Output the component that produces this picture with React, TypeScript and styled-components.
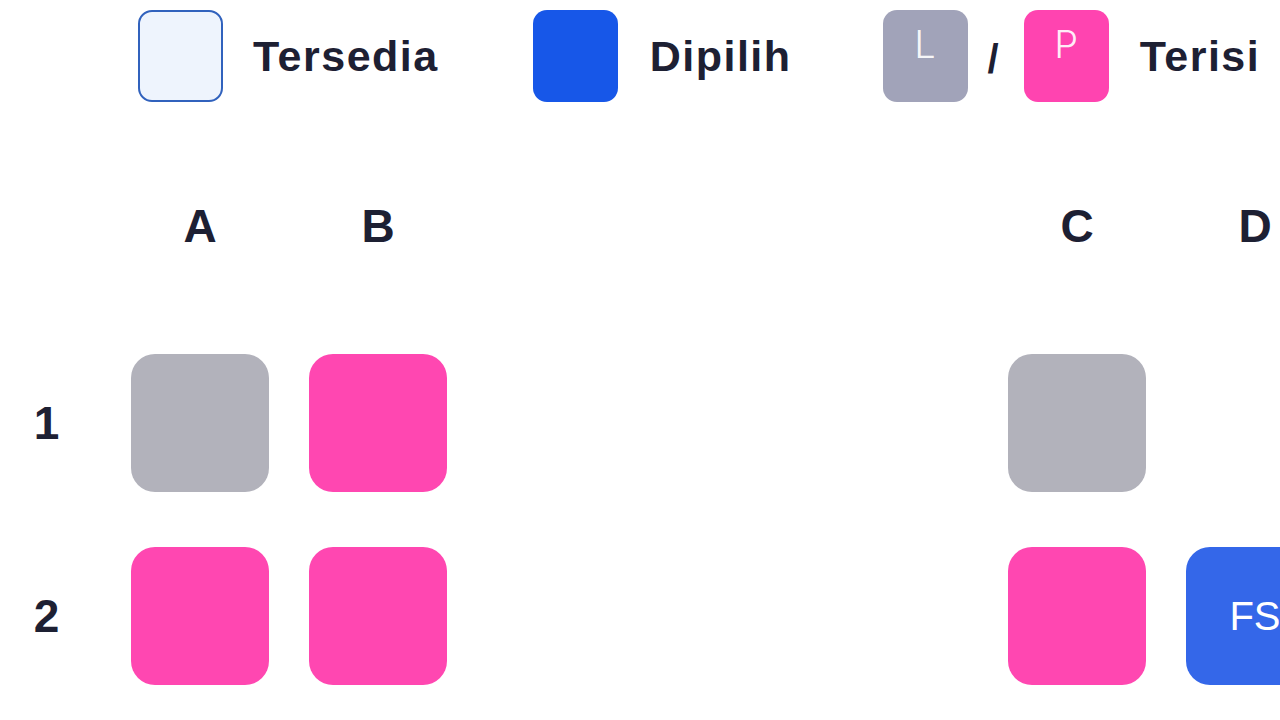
import React from 'react';
import styled, { createGlobalStyle } from 'styled-components';

const GlobalStyle = createGlobalStyle`
    html, body {
        margin: 0;
        padding: 0;
        background: #FFFFFF;
        overflow: hidden;
    }
    body {
        font-family: "Liberation Sans", Arial, sans-serif;
        color: #1d2033;
    }
`;

const Page = styled.div`
    width: 1280px;
    height: 720px;
    overflow: hidden;
    background: #FFFFFF;
`;

const Legend = styled.div`
    display: flex;
    align-items: center;
    padding: 10px 0 0 138px;
    height: 92px;
`;

const LegendItem = styled.div<{ $after?: number }>`
    display: flex;
    align-items: center;
    margin-right: ${p => p.$after ?? 0}px;
`;

const LegendBox = styled.div<{ $bg: string; $border?: string }>`
    width: 85px;
    height: 92px;
    box-sizing: border-box;
    border-radius: 14px;
    background: ${p => p.$bg};
    border: ${p => (p.$border ? `2px solid ${p.$border}` : 'none')};
    display: flex;
    justify-content: center;
    color: rgba(255, 255, 255, 0.92);
    font-family: Inter, "Liberation Sans", sans-serif;
    font-weight: 300;
    font-size: 38px;
    line-height: 1;
    padding-top: 15px;
`;

const LegendLabel = styled.span<{ $gap?: number }>`
    margin-left: ${p => p.$gap ?? 31}px;
    font-size: 43px;
    font-weight: 700;
    letter-spacing: 1.5px;
    color: #1d2033;
`;

const Slash = styled.span`
    margin: 6px 25px 0 20px;
    font-size: 40px;
    font-weight: 700;
    color: #1d2033;
`;

const Grid = styled.div`
    display: grid;
    grid-template-columns: 91px 138px 138px 481px 138px 138px;
    column-gap: 40px;
    width: 1400px;
`;

const HeaderGrid = styled(Grid)`
    margin-top: 96px;
    margin-bottom: 100px;
    height: 56px;
`;

const SeatGrid = styled(Grid)`
    row-gap: 55px;
    grid-auto-rows: 138px;
`;

const ColHead = styled.div`
    display: flex;
    align-items: center;
    justify-content: center;
    font-size: 46px;
    font-weight: 700;
    line-height: 56px;
    color: #1d2033;
`;

const RowLabel = styled.div`
    display: flex;
    align-items: center;
    justify-content: center;
    padding-left: 2px;
    font-size: 46px;
    font-weight: 700;
    color: #1d2033;
`;

type SeatKind = 'male' | 'female' | 'selected' | 'empty';

const seatColors: Record<SeatKind, string> = {
    male: '#b2b2bb',
    female: '#ff47b1',
    selected: '#3467e9',
    empty: 'transparent',
};

const Seat = styled.div<{ $kind: SeatKind }>`
    width: 138px;
    height: 138px;
    border-radius: 24px;
    background: ${p => seatColors[p.$kind]};
    display: flex;
    align-items: center;
    justify-content: center;
    color: #FFFFFF;
    font-size: 40px;
    font-weight: 400;
`;

const Aisle = styled.div``;

const rows: { label: string; seats: [SeatKind, SeatKind, SeatKind, SeatKind]; code?: string }[] = [
    { label: '1', seats: ['male', 'female', 'male', 'empty'] },
    { label: '2', seats: ['female', 'female', 'female', 'selected'], code: 'FS' },
];

const App: React.FC = () => {
    return (
        <Page>
            <GlobalStyle />
            <Legend>
                <LegendItem $after={94}>
                    <LegendBox $bg="#eef4fd" $border="#3162bd" />
                    <LegendLabel $gap={30}>Tersedia</LegendLabel>
                </LegendItem>
                <LegendItem $after={91}>
                    <LegendBox $bg="#1757e8" />
                    <LegendLabel $gap={32}>Dipilih</LegendLabel>
                </LegendItem>
                <LegendItem>
                    <LegendBox $bg="#a1a3b9">L</LegendBox>
                    <Slash>/</Slash>
                    <LegendBox $bg="#ff44b0">P</LegendBox>
                    <LegendLabel $gap={31}>Terisi</LegendLabel>
                </LegendItem>
            </Legend>

            <HeaderGrid>
                <div />
                <ColHead>A</ColHead>
                <ColHead>B</ColHead>
                <Aisle />
                <ColHead>C</ColHead>
                <ColHead>D</ColHead>
            </HeaderGrid>

            <SeatGrid>
                {rows.map(r => (
                    <React.Fragment key={r.label}>
                        <RowLabel>{r.label}</RowLabel>
                        <Seat $kind={r.seats[0]} />
                        <Seat $kind={r.seats[1]} />
                        <Aisle />
                        <Seat $kind={r.seats[2]} />
                        <Seat $kind={r.seats[3]}>{r.seats[3] === 'selected' ? r.code : null}</Seat>
                    </React.Fragment>
                ))}
            </SeatGrid>
        </Page>
    );
};

export default App;
